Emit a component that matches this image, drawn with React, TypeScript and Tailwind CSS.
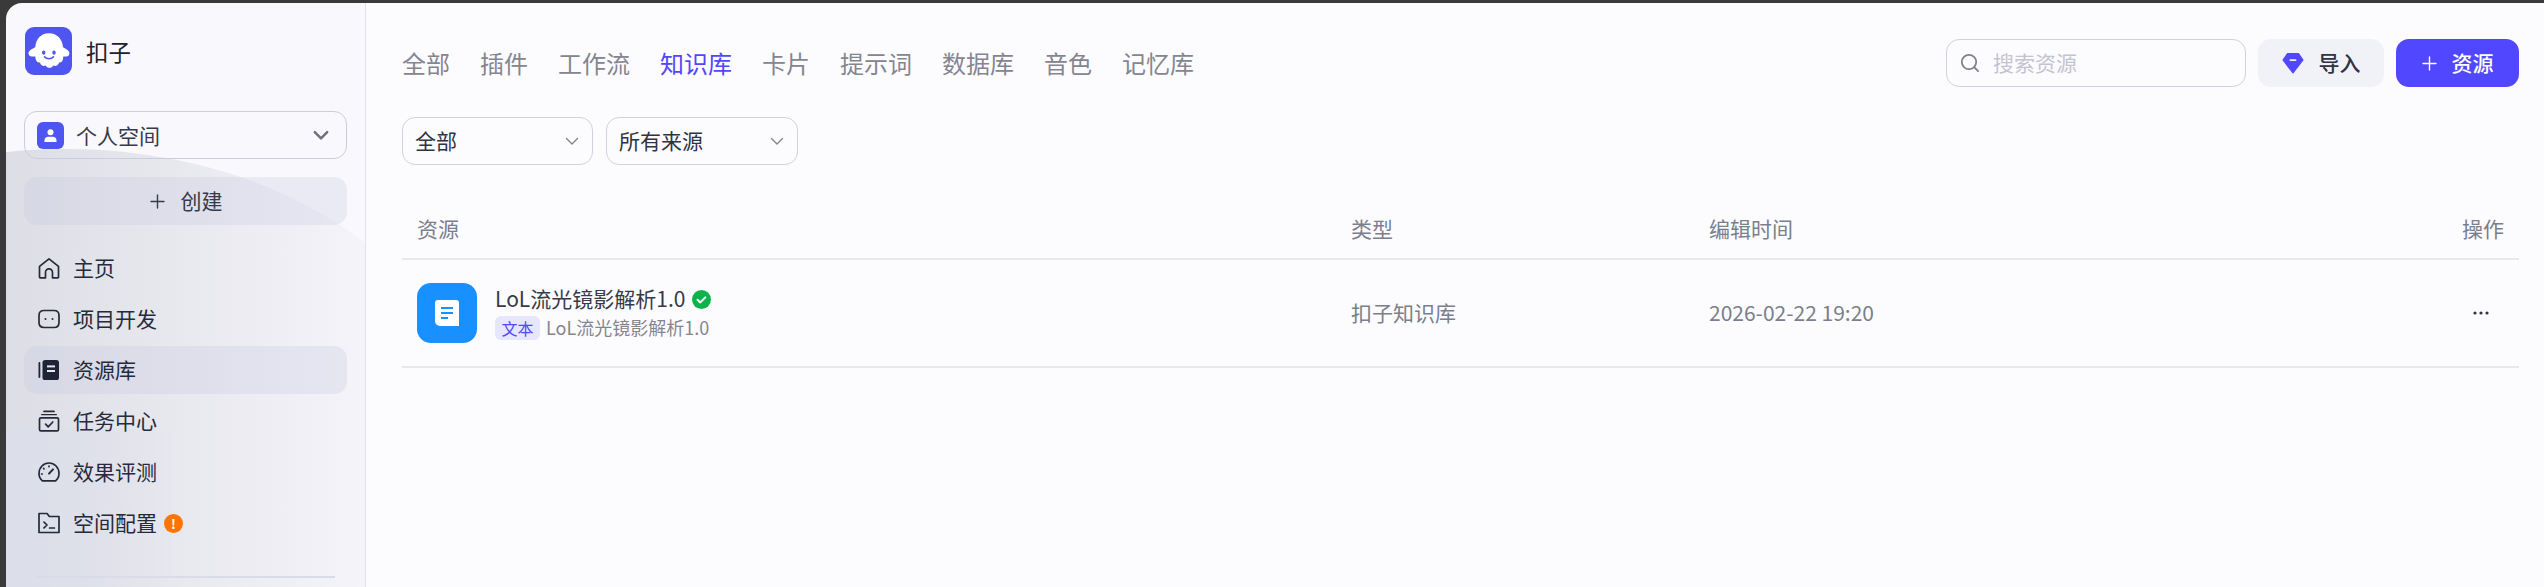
import React from "react";

const font = { fontFamily: '"Noto Sans CJK SC", "Noto Sans", sans-serif' };

function Logo() {
  return (
    <svg width="47" height="48" viewBox="0 0 47 48" className="shrink-0">
      <rect width="47" height="48" rx="9" fill="#4F55F1" />
      <path
        d="M24 6.3C15.5 6.3 10.8 12.6 10.3 20.3C7.5 22 3.6 23 3.5 26.4C3.6 29.6 7.4 29.8 10.4 29.4C10.3 33 12 35.6 15 35.6C15.5 38.6 18.6 39.6 20.8 38.5C22 41.6 27 41.6 28.2 38.5C30.4 39.6 33.5 38.6 34 35.6C37 35.6 38.4 33 38.2 29.4C41 29.8 44.4 29.6 44.4 26.4C44.4 23 40.6 22 38 20.3C37.4 12.6 32.5 6.3 24 6.3Z"
        fill="#fff"
      />
      <ellipse cx="18.7" cy="25.6" rx="1.7" ry="2.2" fill="#4F55F1" />
      <ellipse cx="29" cy="25.6" rx="1.7" ry="2.2" fill="#4F55F1" />
      <path d="M19.5 29.8C21.5 32.4 26.5 32.4 28.5 29.8" fill="none" stroke="#4F55F1" strokeWidth="1.6" strokeLinecap="round" />
    </svg>
  );
}

const iconProps = {
  width: 22,
  height: 22,
  viewBox: "0 0 22 22",
  fill: "none",
  stroke: "#252a3b",
  strokeWidth: 1.7,
  strokeLinejoin: "round" as const,
  strokeLinecap: "round" as const,
  className: "shrink-0",
};

const icons: Record<string, React.ReactNode> = {
  home: (
    <svg {...iconProps}>
      <path d="M1.5 9.4 11 1.8l9.5 7.6V20a.8.8 0 0 1-.8.8h-5.2v-5.4a3.5 3.5 0 0 0-7 0v5.4H2.3a.8.8 0 0 1-.8-.8Z" />
    </svg>
  ),
  project: (
    <svg {...iconProps}>
      <path d="M6 2.5h10c3 0 5 2 5 5v7c0 3-2 5-5 5H6c-3 0-5-2-5-5v-7c0-3 2-5 5-5Z" />
      <circle cx="7.5" cy="11" r="1" fill="#252a3b" stroke="none" />
      <circle cx="14.5" cy="11" r="1" fill="#252a3b" stroke="none" />
    </svg>
  ),
  library: (
    <svg {...iconProps} stroke="none">
      <rect x="0.5" y="3" width="1.8" height="16" rx="0.9" fill="#1e2436" />
      <rect x="4.5" y="1" width="16.5" height="20" rx="2.6" fill="#1e2436" />
      <rect x="9" y="6.4" width="8" height="2" fill="#e8e8f2" />
      <rect x="9" y="11" width="8" height="2" fill="#e8e8f2" />
    </svg>
  ),
  task: (
    <svg {...iconProps}>
      <path d="M6 1.4h10" />
      <path d="M3.6 4.6h14.8" strokeWidth="1.3" />
      <rect x="1.5" y="7.8" width="19" height="13" rx="1.4" />
      <path d="m7.6 14.2 2.6 2.6 4.6-4.8" />
    </svg>
  ),
  gauge: (
    <svg {...iconProps}>
      <path d="M4.4 19.8h13.2C19.7 18 21 15.4 21 12.4 21 6.6 16.5 2 11 2S1 6.6 1 12.4c0 3 1.3 5.6 3.4 7.4Z" />
      <path d="m11 12.6 4-4.2" strokeWidth="2" />
      <path d="M11 5v.6M5.6 7.4l.4.4M3.6 13h.6" />
    </svg>
  ),
  config: (
    <svg {...iconProps}>
      <path d="M1 1.5h8l2.4 3H21v16H1Z" />
      <path d="m6 10.2 3 2.8-3 2.8M11.6 16h4.8" />
    </svg>
  ),
};

function Chevron({ size = 16, color = "#85858f", width = 1.6 }: { size?: number; color?: string; width?: number }) {
  return (
    <svg width={size} height={size} viewBox="0 0 16 16" fill="none" className="shrink-0">
      <path d="M2.5 5.5 8 11l5.5-5.5" stroke={color} strokeWidth={width} strokeLinecap="round" strokeLinejoin="round" />
    </svg>
  );
}

function Plus({ color }: { color: string }) {
  return (
    <svg width="15" height="15" viewBox="0 0 15 15" className="shrink-0">
      <path d="M7.5 1v13M1 7.5h13" stroke={color} strokeWidth="1.4" strokeLinecap="round" />
    </svg>
  );
}

const nav = [
  { key: "home", label: "主页" },
  { key: "project", label: "项目开发" },
  { key: "library", label: "资源库", active: true },
  { key: "task", label: "任务中心" },
  { key: "gauge", label: "效果评测" },
  { key: "config", label: "空间配置", badge: true },
];

function Sidebar() {
  return (
    <aside className="relative w-[360px] h-full shrink-0 overflow-hidden rounded-tl-[16px] border-r border-[#e2e3ef] bg-[#f8f8fd] px-[18px] pt-[24px]">
      <div
        className="absolute left-[-340px] top-[146px] h-[560px] w-[800px] rounded-[50%]"
        style={{ background: "linear-gradient(90deg,#d8d8e0 0%,#dddde5 42.5%,#f6f6fb 92%)" }}
      />
      <div
        className="absolute left-[-340px] top-[424px] h-[360px] w-[800px] rounded-[50%]"
        style={{ background: "linear-gradient(90deg,#d8dbe8 0%,#dcdfea 42.5%,rgba(240,241,248,0) 64%)" }}
      />
      <div className="relative">
        <div className="flex items-center pl-[1px] gap-[14px]">
          <Logo />
          <span className="text-[22.4px] leading-[32px] text-[#1c2030]">扣子</span>
        </div>
        <div className="mt-[36px] flex h-[48px] items-center rounded-[13px] border border-[#cbccdd] pl-[12px] pr-[16px]">
          <span className="flex h-[27px] w-[27px] items-center justify-center rounded-[6px] bg-[#4f55f1]">
            <svg width="15" height="15" viewBox="0 0 15 15" fill="#fff">
              <circle cx="7.5" cy="4.2" r="3" />
              <path d="M1.5 14v-1.6c0-2.3 1.7-3.6 3.6-3.6h4.8c1.9 0 3.6 1.3 3.6 3.6V14Z" />
            </svg>
          </span>
          <span className="ml-[12px] flex-1 text-[21px] leading-[28px] text-[#363a4a]">个人空间</span>
          <Chevron color="#6d7080" size={18} width={2.2} />
        </div>
        <div className="mt-[18px] flex h-[48px] items-center justify-center gap-[16px] rounded-[13px] bg-[rgba(200,202,225,0.3)] pl-[1px] text-[21px] text-[#363a4a]">
          <Plus color="#363a4a" />
          <span>创建</span>
        </div>
        <nav className="mt-[19px] flex flex-col gap-[3px]">
          {nav.map((n) => (
            <div
              key={n.key}
              className={
                n.active
                  ? "flex h-[48px] items-center gap-[13px] rounded-[13px] bg-[rgba(200,202,225,0.3)] pl-[14px] text-[21px] text-[#262b3c]"
                  : "flex h-[48px] items-center gap-[13px] rounded-[13px] pl-[14px] text-[21px] text-[#262b3c]"
              }
            >
              {icons[n.key]}
              <span>{n.label}</span>
              {n.badge && (
                <span className="-ml-[6px] flex h-[19px] w-[19px] items-center justify-center rounded-full bg-[#ff7300] text-[13px] font-bold leading-none text-white">
                  !
                </span>
              )}
            </div>
          ))}
        </nav>
        <div className="mx-[12px] mt-[29px] h-[2px] w-[299px] bg-[#d9dce8]" />
      </div>
    </aside>
  );
}

const tabs = ["全部", "插件", "工作流", "知识库", "卡片", "提示词", "数据库", "音色", "记忆库"];

function Select({ label, width }: { label: string; width: string }) {
  return (
    <div className={`${width} flex h-[48px] items-center justify-between rounded-[13px] border border-[#d0d1e0] pl-[12px] pr-[12px] text-[21px] text-[#2f3342]`}>
      <span>{label}</span>
      <Chevron color="#85858f" size={16} width={1.4} />
    </div>
  );
}

function Main() {
  return (
    <main className="h-full min-w-0 flex-1 bg-[#fcfcff] pl-[36px] pr-[25px] pt-[36px]">
      <div className="flex h-[48px] items-center justify-between">
        <div className="flex gap-[30px] text-[24px] leading-[32px] text-[#85858f]">
          {tabs.map((t) => (
            <span key={t} className={t === "知识库" ? "text-[#5147ff]" : ""}>
              {t}
            </span>
          ))}
        </div>
        <div className="flex items-center gap-[12px]">
          <div className="flex h-[48px] w-[300px] items-center gap-[13px] rounded-[13px] border border-[#d0d1e0] pl-[13px] text-[21px] text-[#c3c4d0]">
            <svg width="20" height="20" viewBox="0 0 20 20" fill="none" stroke="#7f818f" strokeWidth="1.8" strokeLinecap="round">
              <circle cx="9" cy="9" r="7.2" />
              <path d="m14.5 14.5 3.6 3.6" />
            </svg>
            <span>搜索资源</span>
          </div>
          <div className="flex h-[48px] w-[126px] items-center justify-center gap-[15px] rounded-[13px] bg-[#f1f1f8] text-[21px] font-medium text-[#2f3342]">
            <svg width="22" height="22" viewBox="0 0 22 22">
              <path d="M5.5 1.5h11L21 8 11 21 1 8Z" fill="#5147ff" stroke="#5147ff" strokeLinejoin="round" strokeWidth="1.2" />
              <rect x="7.5" y="7.2" width="7" height="1.8" rx="0.9" fill="#f1f1f8" />
            </svg>
            <span>导入</span>
          </div>
          <div className="flex h-[48px] w-[123px] items-center justify-center gap-[15px] rounded-[13px] bg-[#5147ff] text-[21px] font-medium text-white">
            <Plus color="#fff" />
            <span>资源</span>
          </div>
        </div>
      </div>

      <div className="mt-[30px] flex gap-[13px]">
        <Select label="全部" width="w-[191px]" />
        <Select label="所有来源" width="w-[192px]" />
      </div>

      <div className="mt-[36px] grid h-[59px] grid-cols-[934px_358px_1fr_auto] items-center border-b-2 border-[#e7e7ef] pl-[15px] pr-[15px] pb-[1px] text-[21px] text-[#7b7e8c]">
        <span>资源</span>
        <span>类型</span>
        <span>编辑时间</span>
        <span>操作</span>
      </div>
      <div className="grid h-[108px] grid-cols-[934px_358px_1fr_auto] items-center border-b-2 border-[#e7e7ef] pl-[15px] pr-[15px] text-[21px] text-[#7b7e8c]">
        <div className="flex items-center gap-[18px]">
          <span className="flex h-[60px] w-[60px] items-center justify-center rounded-[14px] bg-[#1890ff]">
            <svg width="24" height="26" viewBox="0 0 24 26">
              <path d="M3 0h18a3 3 0 0 1 3 3v23H5a5 5 0 0 1-5-5V3a3 3 0 0 1 3-3Z" fill="#fff" />
              <path d="M6 8h12M6 13h12M6 18h7" stroke="#1890ff" strokeWidth="2" />
            </svg>
          </span>
          <div className="flex flex-col">
            <div className="flex h-[28px] items-center gap-[7px] text-[#363a4a]">
              <span>LoL流光镜影解析1.0</span>
              <svg width="19" height="19" viewBox="0 0 19 19">
                <circle cx="9.5" cy="9.5" r="9.5" fill="#0cb24a" />
                <path d="m5.5 9.8 2.8 2.6 5-5" fill="none" stroke="#fff" strokeWidth="2" strokeLinecap="round" strokeLinejoin="round" />
              </svg>
            </div>
            <div className="mt-[1px] flex items-center gap-[6px]">
              <span className="flex h-[24px] w-[45px] items-center justify-center rounded-[6px] bg-[#e6e6ff] text-[16px] text-[#5147ff]">文本</span>
              <span className="text-[18px] text-[#85858f]">LoL流光镜影解析1.0</span>
            </div>
          </div>
        </div>
        <span>扣子知识库</span>
        <span>2026-02-22 19:20</span>
        <span className="flex w-[41px] items-center justify-center pr-[6px]">
          <svg width="16" height="4" viewBox="0 0 16 4" fill="#2f3342">
            <circle cx="2" cy="2" r="1.6" />
            <circle cx="8" cy="2" r="1.6" />
            <circle cx="14" cy="2" r="1.6" />
          </svg>
        </span>
      </div>
    </main>
  );
}

export default function App() {
  return (
    <div className="flex h-[587px] w-[2544px] overflow-hidden bg-[#3a3a3a] pl-[6px] pt-[3px]" style={font}>
      <Sidebar />
      <Main />
    </div>
  );
}
